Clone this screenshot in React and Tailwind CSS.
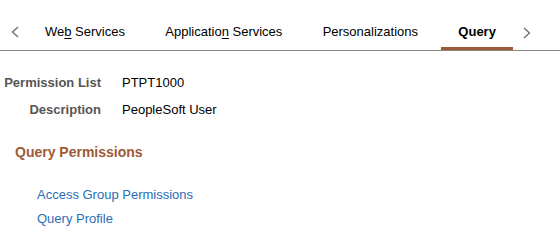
import React from "react";

const tabs = [
  { label: "Web Services", pre: "We", key: "b", post: " Services" },
  { label: "Application Services", pre: "Applicatio", key: "n", post: " Services" },
  { label: "Personalizations", pre: "Personalizations", key: "", post: "" },
  { label: "Query", pre: "Query", key: "", post: "", active: true },
];

function Chevron({ dir }) {
  return (
    <svg width="8" height="12" viewBox="0 0 8 12" className="shrink-0">
      <polyline
        points={dir === "left" ? "7,1 1.5,6 7,11" : "1,1 6.5,6 1,11"}
        fill="none"
        stroke="#6b6b6b"
        strokeWidth="1.3"
      />
    </svg>
  );
}

export default function App() {
  return (
    <div className="w-[560px] h-[246px] bg-white font-['Liberation_Sans',Arial,sans-serif] text-[13px] text-[#333]">
      {/* tab strip */}
      <div className="flex items-start h-[51px] border-b border-[#8c8580]">
        <div className="w-[28px] h-[50px] flex pt-[26px] pl-[11px]">
          <Chevron dir="left" />
        </div>
        <div className="flex gap-[6.3px]">
          {tabs.map((t) => (
            <div
              key={t.label}
              className={
                "h-[50px] px-[17px] pt-[24px] leading-4 whitespace-nowrap " +
                (t.active
                  ? "border-b-[3px] border-[#a0583a] font-bold text-black"
                  : "text-black")
              }
            >
              {t.pre}
              {t.key && <span className="underline underline-offset-2">{t.key}</span>}
              {t.post}
            </div>
          ))}
        </div>
        <div className="pt-[27px] pl-[10px]">
          <Chevron dir="right" />
        </div>
      </div>

      {/* header fields */}
      <div className="pt-[24px] flex flex-col gap-[11px]">
        <div className="flex leading-4">
          <div className="w-[101px] text-right font-bold text-[#555]">Permission List</div>
          <div className="pl-[21px] text-black">PTPT1000</div>
        </div>
        <div className="flex leading-4">
          <div className="w-[101px] text-right font-bold text-[#555]">Description</div>
          <div className="pl-[21px] text-black">PeopleSoft User</div>
        </div>
      </div>

      {/* section */}
      <div className="pl-[15px] pt-[25px] text-[14px] leading-[18px] font-bold text-[#9c5a38]">
        Query Permissions
      </div>

      <div className="pl-[37px] pt-[26px] flex flex-col gap-[8px] text-[#2a6db6]">
        <a href="#" className="leading-4">Access Group Permissions</a>
        <a href="#" className="leading-4">Query Profile</a>
      </div>
    </div>
  );
}
